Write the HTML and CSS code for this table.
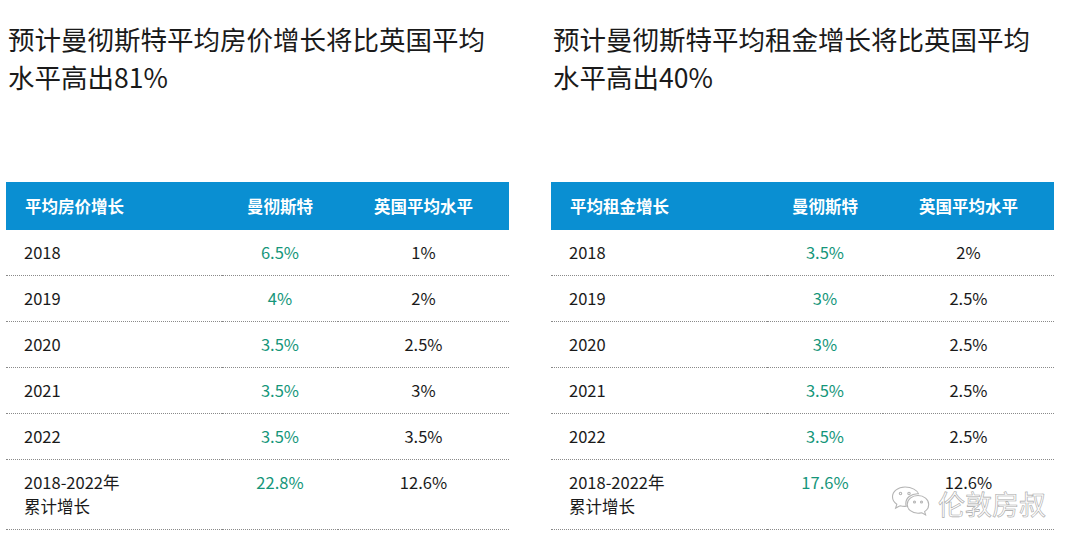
FILE: index.html
```html
<!DOCTYPE html>
<html lang="zh">
<head>
<meta charset="utf-8">
<link rel="stylesheet" href="styles.css">
</head>
<body>
<div class="page">
  <section class="panel">
    <h1 class="title">预计曼彻斯特平均房价增长将比英国平均<br>水平高出81%</h1>
    <table class="data">
      <colgroup><col class="c1"><col class="c2"><col class="c3"></colgroup>
      <thead>
        <tr><th class="first">平均房价增长</th><th>曼彻斯特</th><th>英国平均水平</th></tr>
      </thead>
      <tbody>
        <tr><td class="first">2018</td><td class="green">6.5%</td><td>1%</td></tr>
        <tr><td class="first">2019</td><td class="green">4%</td><td>2%</td></tr>
        <tr><td class="first">2020</td><td class="green">3.5%</td><td>2.5%</td></tr>
        <tr><td class="first">2021</td><td class="green">3.5%</td><td>3%</td></tr>
        <tr><td class="first">2022</td><td class="green">3.5%</td><td>3.5%</td></tr>
        <tr class="total"><td class="first">2018-2022年<br>累计增长</td><td class="green">22.8%</td><td>12.6%</td></tr>
      </tbody>
    </table>
  </section>
  <section class="panel">
    <h1 class="title">预计曼彻斯特平均租金增长将比英国平均<br>水平高出40%</h1>
    <table class="data">
      <colgroup><col class="c1"><col class="c2"><col class="c3"></colgroup>
      <thead>
        <tr><th class="first">平均租金增长</th><th>曼彻斯特</th><th>英国平均水平</th></tr>
      </thead>
      <tbody>
        <tr><td class="first">2018</td><td class="green">3.5%</td><td>2%</td></tr>
        <tr><td class="first">2019</td><td class="green">3%</td><td>2.5%</td></tr>
        <tr><td class="first">2020</td><td class="green">3%</td><td>2.5%</td></tr>
        <tr><td class="first">2021</td><td class="green">3.5%</td><td>2.5%</td></tr>
        <tr><td class="first">2022</td><td class="green">3.5%</td><td>2.5%</td></tr>
        <tr class="total"><td class="first">2018-2022年<br>累计增长</td><td class="green">17.6%</td><td>12.6%</td></tr>
      </tbody>
    </table>
  </section>
  <div class="watermark">
    <svg class="wm-icon" width="42" height="40" viewBox="0 0 42 40" fill="none" stroke="#b4b4b4" stroke-width="1.1">
      <path d="M15 3C8 3 2.5 7.3 2.5 12.8c0 3 1.7 5.7 4.3 7.5l-1.2 3.8 4.5-2.3c1.5.4 3.1.6 4.7.6.5 0 1 0 1.5-.1-.3-.9-.5-1.9-.5-2.9 0-5.4 5.2-9.7 11.700-9.7h.9C27.4 6.4 21.8 3 15 3z"/>
      <path d="M28 11.5c-6 0-10.8 4-10.8 8.9s4.8 8.9 10.8 8.9c1.3 0 2.6-.2 3.8-.5l3.8 2.1-1-3.3c2.5-1.6 4.1-4.2 4.1-7.2 0-4.9-4.8-8.9-10.700-8.9z"/>
      <circle cx="10.5" cy="9.5" r="1.2"/>
      <circle cx="19" cy="9.5" r="1.2"/>
      <circle cx="24.5" cy="18" r="1"/>
      <circle cx="31.5" cy="18" r="1"/>
    </svg>
    <span class="wm-text">伦敦房叔</span>
  </div>
</div>
</body>
</html>
```

FILE: styles.css
```css
html, body {
  margin: 0;
  padding: 0;
  background: #ffffff;
}

body {
  font-family: "Noto Sans CJK SC", "Noto Sans", sans-serif;
  color: #1a1a1a;
}

.page {
  position: relative;
  display: flex;
  gap: 42px;
  padding-left: 6px;
  width: 1080px;
  height: 552px;
  box-sizing: border-box;
}

.panel {
  width: 503px;
  display: flex;
  flex-direction: column;
}

.title {
  margin: 20px 0 0 2px;
  font-size: 26.5px;
  line-height: 38px;
  font-weight: 400;
  color: #1a1a1a;
  height: 162px;
}

.data {
  border-collapse: collapse;
  width: 503px;
  table-layout: fixed;
  font-size: 16.5px;
}

.c1 { width: 216px; }
.c2 { width: 116px; }
.c3 { width: 171px; }

.data th {
  background: #0a8fd2;
  color: #ffffff;
  font-weight: 700;
  height: 48px;
  padding: 0;
  text-align: center;
  font-size: 16.5px;
}

.data th.first {
  text-align: left;
  padding-left: 19px;
}

.data td {
  height: 24px;
  line-height: 24px;
  padding: 10px 0 11px;
  text-align: center;
  vertical-align: top;
  border-bottom: 1px dotted #8a8a8a;
  color: #1a1a1a;
}

.data td.first {
  text-align: left;
  padding-left: 18px;
}

.data td.green {
  color: #15967a;
}

.watermark {
  position: absolute;
  left: 890px;
  top: 484px;
  display: flex;
  align-items: center;
  gap: 6px;
}

.wm-text {
  font-size: 27px;
  line-height: 36px;
  color: #ffffff;
  -webkit-text-stroke: 0.6px #a8a8a8;
}
```
